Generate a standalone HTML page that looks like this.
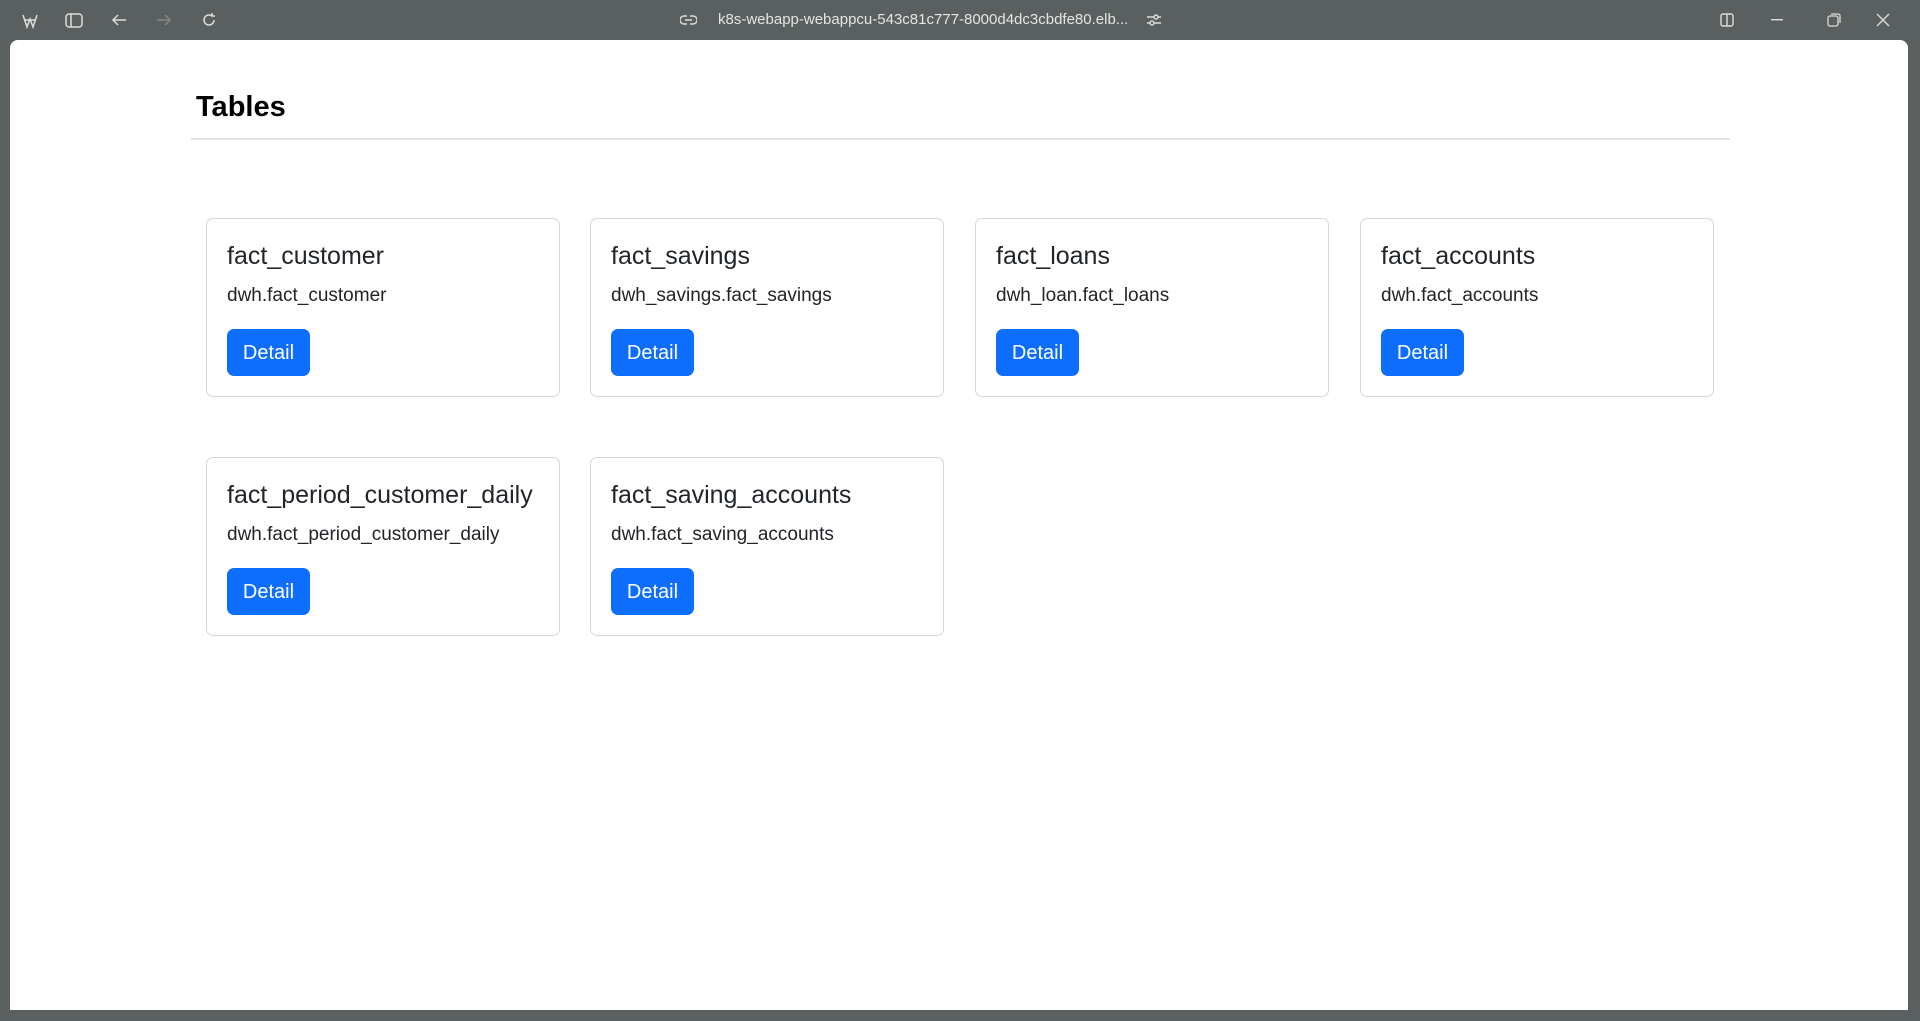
<!DOCTYPE html>
<html><head><meta charset="utf-8"><style>
*{margin:0;padding:0;box-sizing:border-box}
body{width:1920px;height:1021px;background:#5a5f5f;position:relative;overflow:hidden;font-family:"Liberation Sans",sans-serif}
.bar{position:absolute;left:0;top:0;width:1920px;height:40px;color:#e8e8e8}
.url{position:absolute;left:718px;top:11px;font-size:15px;color:#e6e6e6}
.page{position:absolute;left:10px;top:40px;width:1898px;height:970px;background:#fff;border-radius:8px 8px 0 0}
h1{position:absolute;left:196px;top:91px;font-size:29px;font-weight:bold;color:#000}
.hr{position:absolute;left:191px;top:138px;width:1539px;height:2px;background:#e2e2e2}
.card{position:absolute;width:354px;height:179px;border:1px solid #d6d6d6;border-radius:7px;background:#fff}
.card .t{position:absolute;left:20px;top:23px;font-size:25px;color:#212529}
.card .s{position:absolute;left:20px;top:66px;font-size:19px;color:#212529}
.card .b{position:absolute;left:20px;top:110px;width:83px;height:47px;background:#0d6efd;border-radius:7px;color:#fff;font-size:20px;line-height:49px;text-align:center}
svg{position:absolute}
</style></head><body>
<div class="bar">
<svg style="left:20px;top:11px" width="20" height="20" viewBox="0 0 20 20" fill="none" stroke="#ddd" stroke-width="1.5"><path d="M3 4l4 12 3-8 3 8 4-12M5 9h10"/></svg>
<svg style="left:65px;top:13px" width="18" height="15" viewBox="0 0 18 15" fill="none" stroke="#ddd" stroke-width="1.5"><rect x="1" y="1" width="16" height="13" rx="3"/><path d="M6 1v13"/></svg>
<svg style="left:111px;top:12px" width="16" height="16" viewBox="0 0 16 16" fill="none" stroke="#ddd" stroke-width="1.5"><path d="M15 8H2M7 3L2 8l5 5"/></svg>
<svg style="left:156px;top:12px" width="16" height="16" viewBox="0 0 16 16" fill="none" stroke="#888" stroke-width="1.5"><path d="M1 8h13M9 3l5 5-5 5"/></svg>
<svg style="left:201px;top:12px" width="16" height="16" viewBox="0 0 16 16" fill="none" stroke="#ddd" stroke-width="1.5"><path d="M13 8a5 5 0 1 1-2-4M11 1v3h3"/></svg>
<svg style="left:680px;top:14px" width="17" height="12" viewBox="0 0 17 12" fill="none" stroke="#ddd" stroke-width="1.4"><path d="M7 2H4a4 4 0 0 0 0 8h3M10 2h3a4 4 0 0 1 0 8h-3M5 6h7"/></svg>
<div class="url">k8s-webapp-webappcu-543c81c777-8000d4dc3cbdfe80.elb...</div>
<svg style="left:1146px;top:12px" width="16" height="16" viewBox="0 0 16 16" fill="none" stroke="#ddd" stroke-width="1.4"><path d="M1 5h14M1 11h14"/><circle cx="10" cy="5" r="2" fill="#5a5f5f"/><circle cx="6" cy="11" r="2" fill="#5a5f5f"/></svg>
<svg style="left:1720px;top:13px" width="14" height="14" viewBox="0 0 14 14" fill="none" stroke="#ddd" stroke-width="1.4"><rect x="1" y="1" width="12" height="12" rx="2"/><path d="M7 1v12"/></svg>
<svg style="left:1771px;top:19px" width="12" height="2"><rect width="12" height="1.4" fill="#ddd"/></svg>
<svg style="left:1827px;top:13px" width="14" height="14" viewBox="0 0 14 14" fill="none" stroke="#ddd" stroke-width="1.3"><rect x="1" y="3" width="10" height="10" rx="2"/><path d="M4 1h7a2 2 0 0 1 2 2v7"/></svg>
<svg style="left:1876px;top:13px" width="14" height="14" viewBox="0 0 14 14" fill="none" stroke="#ddd" stroke-width="1.4"><path d="M1 1l12 12M13 1L1 13"/></svg>
</div>
<div class="page"></div>
<h1>Tables</h1>
<div class="hr"></div>
<div class="card" style="left:206px;top:218px"><div class="t">fact_customer</div><div class="s">dwh.fact_customer</div><div class="b">Detail</div></div>
<div class="card" style="left:590px;top:218px"><div class="t">fact_savings</div><div class="s">dwh_savings.fact_savings</div><div class="b">Detail</div></div>
<div class="card" style="left:975px;top:218px"><div class="t">fact_loans</div><div class="s">dwh_loan.fact_loans</div><div class="b">Detail</div></div>
<div class="card" style="left:1360px;top:218px"><div class="t">fact_accounts</div><div class="s">dwh.fact_accounts</div><div class="b">Detail</div></div>
<div class="card" style="left:206px;top:457px"><div class="t">fact_period_customer_daily</div><div class="s">dwh.fact_period_customer_daily</div><div class="b">Detail</div></div>
<div class="card" style="left:590px;top:457px"><div class="t">fact_saving_accounts</div><div class="s">dwh.fact_saving_accounts</div><div class="b">Detail</div></div>
</body></html>
